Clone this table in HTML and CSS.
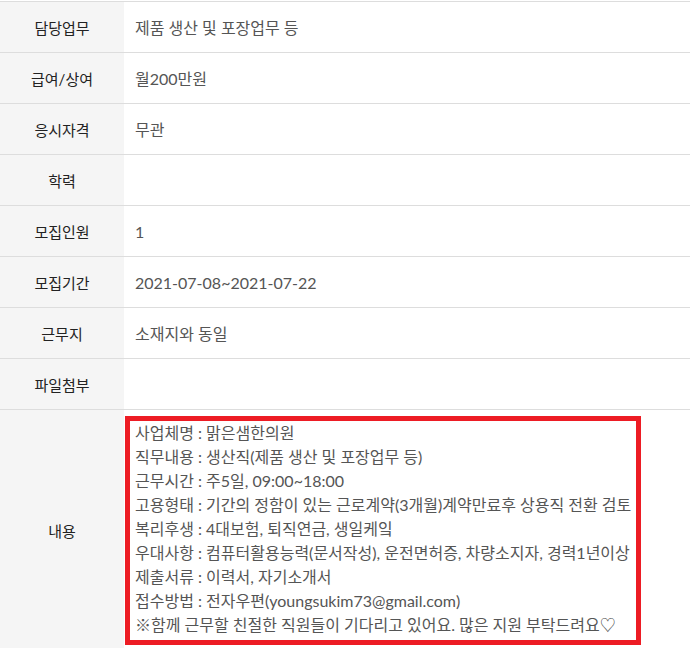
FILE: index.html
```html
<!DOCTYPE html>
<html lang="ko">
<head>
    <meta charset="UTF-8" />
    <meta name="viewport" content="width=device-width, initial-scale=1" />
    <title>채용정보</title>
    <link rel="stylesheet" href="styles.css">
</head>
<body>
    <table class="recruit">
        <tbody>
            <tr>
                <th>담당업무</th>
                <td>제품 생산 및 포장업무 등</td>
            </tr>
            <tr>
                <th>급여/상여</th>
                <td>월200만원</td>
            </tr>
            <tr>
                <th>응시자격</th>
                <td>무관</td>
            </tr>
            <tr>
                <th>학력</th>
                <td></td>
            </tr>
            <tr>
                <th>모집인원</th>
                <td>1</td>
            </tr>
            <tr>
                <th>모집기간</th>
                <td>2021-07-08~2021-07-22</td>
            </tr>
            <tr>
                <th>근무지</th>
                <td>소재지와 동일</td>
            </tr>
            <tr>
                <th>파일첨부</th>
                <td></td>
            </tr>
            <tr>
                <th>내용</th>
                <td class="content-cell">
                    <div class="notice-box">
                        <p>사업체명 : 맑은샘한의원</p>
                        <p>직무내용 : 생산직(제품 생산 및 포장업무 등)</p>
                        <p>근무시간 : 주5일, 09:00~18:00</p>
                        <p>고용형태 : 기간의 정함이 있는 근로계약(3개월)계약만료후 상용직 전환 검토</p>
                        <p>복리후생 : 4대보험, 퇴직연금, 생일케잌</p>
                        <p>우대사항 : 컴퓨터활용능력(문서작성), 운전면허증, 차량소지자, 경력1년이상</p>
                        <p>제출서류 : 이력서, 자기소개서</p>
                        <p>접수방법 : 전자우편(youngsukim73@gmail.com)</p>
                        <p>※함께 근무할 친절한 직원들이 기다리고 있어요. 많은 지원 부탁드려요♡</p>
                    </div>
                </td>
            </tr>
        </tbody>
    </table>
</body>
</html>
```

FILE: styles.css
```css
body {
    margin: 0;
    padding-top: 1px;
    font-family: Lato, "Noto Sans CJK KR", sans-serif;
    font-size: 15px;
    background: #fff;
}

.recruit {
    width: 100%;
    border-collapse: collapse;
    table-layout: fixed;
    border-top: 1px solid #dddddd;
}

.recruit th,
.recruit td {
    height: 50px;
    border-bottom: 1px solid #dddddd;
    vertical-align: middle;
    padding: 0;
}

.recruit th {
    width: 124px;
    background-color: #f5f5f5;
    color: #222;
    font-weight: normal;
    text-align: center;
}

.recruit td {
    padding-left: 11px;
    color: #555;
    font-size: 16px;
    text-align: left;
}

.recruit td.content-cell {
    padding: 6px 0 6px 1px;
}

.notice-box {
    width: 516px;
    box-sizing: border-box;
    border: 5px solid #ed1c24;
    padding: 0 0 3px 5px;
}

.notice-box p {
    margin: 0;
    line-height: 24px;
    white-space: nowrap;
}
```
